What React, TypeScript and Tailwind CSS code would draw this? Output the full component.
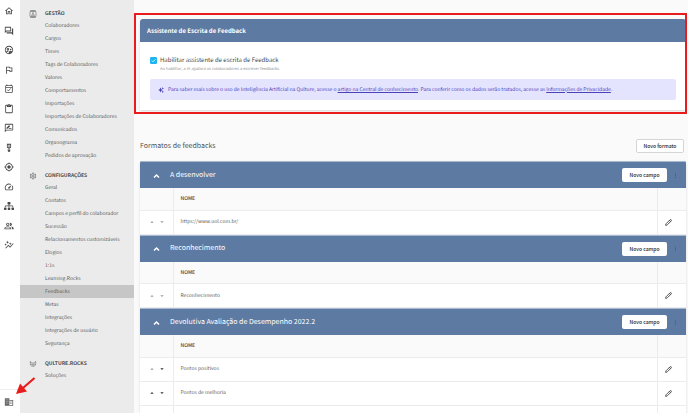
import { useState } from 'react'
import { Pencil } from 'lucide-react'
import type { IconType } from 'react-icons'
import { FaSitemap } from 'react-icons/fa'
import {
  MdArrowDropDown,
  MdArrowDropUp,
  MdAutoGraph,
  MdContentPaste,
  MdMoreVert,
  MdMyLocation,
  MdOutlineContacts,
  MdOutlineEventAvailable,
  MdOutlineFlag,
  MdOutlineForum,
  MdOutlineHome,
  MdOutlineMilitaryTech,
  MdOutlinePeopleAlt,
  MdOutlineRateReview,
  MdOutlineSettings,
  MdOutlineSupervisedUserCircle,
  MdSpeed,
} from 'react-icons/md'

const railItems: { label: string; icon: IconType }[] = [
  { label: 'Início', icon: MdOutlineHome },
  { label: 'Feedbacks', icon: MdOutlineForum },
  { label: 'Equipe', icon: MdOutlineSupervisedUserCircle },
  { label: 'Metas', icon: MdOutlineFlag },
  { label: 'Reuniões', icon: MdOutlineEventAvailable },
  { label: 'Pesquisas', icon: MdContentPaste },
  { label: 'Avaliações', icon: MdOutlineRateReview },
  { label: 'Reconhecimentos', icon: MdOutlineMilitaryTech },
  { label: 'Objetivos', icon: MdMyLocation },
  { label: 'Desempenho', icon: MdSpeed },
  { label: 'Organograma', icon: FaSitemap },
  { label: 'Pessoas', icon: MdOutlinePeopleAlt },
  { label: 'Análises', icon: MdAutoGraph },
]

function QultureIcon({ className }: { className?: string }) {
  return (
    <svg className={className} viewBox="0 0 24 24" fill="none" stroke="currentColor" strokeWidth={2}>
      <path d="M4 4v8c0 4 3 7 8 7s8-3 8-7V4l-4 5H8L4 4z" />
      <path d="M5 13h14M12 13v5" />
    </svg>
  )
}

function BuildingIcon({ className }: { className?: string }) {
  return (
    <svg className={className} viewBox="0 0 24 24" fill="currentColor">
      <path d="M2 3h11v18H2z" />
      <path d="M13 7h9v14h-9v-2h7V9h-7z" />
      <path d="M15 11h3v2h-3zM15 15h3v2h-3z" />
      <path d="M4 7h7M4 11h7M4 15h7" stroke="#fff" strokeWidth={0.8} />
    </svg>
  )
}

const menu = [
  {
    title: 'GESTÃO',
    icon: MdOutlineContacts,
    items: [
      'Colaboradores',
      'Cargos',
      'Times',
      'Tags de Colaboradores',
      'Valores',
      'Comportamentos',
      'Importações',
      'Importações de Colaboradores',
      'Comunicados',
      'Organograma',
      'Pedidos de aprovação',
    ],
  },
  {
    title: 'CONFIGURAÇÕES',
    icon: MdOutlineSettings,
    items: [
      'Geral',
      'Contatos',
      'Campos e perfil do colaborador',
      'Sucessão',
      'Relacionamentos customizáveis',
      'Elogios',
      '1:1s',
      'Learning.Rocks',
      'Feedbacks',
      'Metas',
      'Integrações',
      'Integrações de usuário',
      'Segurança',
    ],
  },
  { title: 'QULTURE.ROCKS', icon: QultureIcon, items: ['Soluções'] },
]

interface Field {
  name: string
  canMoveUp?: boolean
  canMoveDown?: boolean
}

const formats: { title: string; fields: Field[] }[] = [
  { title: 'A desenvolver', fields: [{ name: 'https://www.uol.com.br/' }] },
  { title: 'Reconhecimento', fields: [{ name: 'Reconhecimento' }] },
  {
    title: 'Devolutiva Avaliação de Desempenho 2022.2',
    fields: [
      { name: 'Pontos positivos', canMoveDown: true },
      { name: 'Pontos de melhoria', canMoveUp: true, canMoveDown: true },
      { name: '', canMoveUp: true },
    ],
  },
]

function Rail() {
  return (
    <nav className="flex w-5 shrink-0 flex-col bg-white text-[#4a4a4a]">
      <div className="flex h-[250px] flex-col items-center justify-between pt-[6px]">
        {railItems.map(({ label, icon: Icon }) => (
          <a key={label} href="#" aria-label={label} className="pr-[2px]">
            <Icon className="size-[10px]" />
          </a>
        ))}
      </div>
      <a
        href="#"
        aria-label="Administração"
        className="mt-auto flex h-6 items-center justify-center border-t border-[#eee] pr-[2px] text-[#666]"
      >
        <BuildingIcon className="size-[10px]" />
      </a>
    </nav>
  )
}

function Sidebar() {
  return (
    <aside className="flex w-[114px] shrink-0 flex-col gap-[6px] bg-[#ebebeb] pt-[6px] text-[5px] leading-[13px] text-[#5c5c5c]">
      {menu.map(({ title, icon: Icon, items }) => (
        <section key={title}>
          <h2 className="flex items-center pt-[2px] leading-[11px] font-bold text-[#4a4a4a]">
            <span className="flex w-[25px] justify-center text-[#777]">
              <Icon className="size-2" />
            </span>
            {title}
          </h2>
          <ul>
            {items.map((item) => (
              <li key={item}>
                <a
                  href="#"
                  className={`block pl-[25px] whitespace-nowrap ${item === 'Feedbacks' ? 'bg-[#c6c6c6]' : ''}`}
                >
                  {item}
                </a>
              </li>
            ))}
          </ul>
        </section>
      ))}
    </aside>
  )
}

function AssistantCard() {
  const [enabled, setEnabled] = useState(true)

  return (
    <section className="overflow-hidden rounded-t-[3px] bg-white shadow-sm">
      <h2 className="bg-[#5d7aa2] px-[7px] text-[6px] leading-[23px] font-bold text-white">
        Assistente de Escrita de Feedback
      </h2>
      <div className="px-[10px] pt-3 pb-[10px]">
        <div className="flex items-center gap-[3px]">
          <span className="grid size-[7px] shrink-0">
            <input
              id="assistant"
              type="checkbox"
              checked={enabled}
              onChange={(e) => setEnabled(e.target.checked)}
              className="col-start-1 row-start-1 size-[7px] appearance-none rounded-[1px] border border-[#1cb5f2] checked:bg-[#1cb5f2]"
            />
            {enabled && (
              <svg
                className="pointer-events-none col-start-1 row-start-1 size-[7px] text-white"
                viewBox="0 0 14 14"
                fill="none"
                stroke="currentColor"
                strokeWidth={1.5}
              >
                <path d="M3.5 7.2 6 9.7l4.7-5" />
              </svg>
            )}
          </span>
          <label htmlFor="assistant" className="text-[6px] leading-[12px] text-[#444]">
            Habilitar assistente de escrita de Feedback
          </label>
        </div>
        <p className="pl-[10px] font-['Open_Sans',sans-serif] text-[4px] leading-[7px] text-[#8a8a8a]">
          Ao habilitar, a IA ajudará os colaboradores a escrever feedbacks.
        </p>
        <div className="mt-[6px] flex h-[21px] items-center gap-1 rounded-[2px] bg-[#e5e4ff] px-2 text-[5px] text-[#4a42b8]">
          {/* Sparkle */}
          <svg className="size-[6px] shrink-0" viewBox="0 0 24 24" fill="currentColor">
            <path d="M10 2l3 7 6 3-6 3-3 7-3-7-6-3 6-3z" />
            <path d="M19 0l1.500 3.500L24 5l-3.500 1.500L19 10l-1.500-3.500L14 5l3.500-1.500zM19 14l1.500 3.500L24 19l-3.500 1.500L19 24l-1.500-3.500L14 19l3.500-1.500z" />
          </svg>
          <p className="whitespace-nowrap">
            Para saber mais sobre o uso de Inteligência Artificial na Qulture, acesse o{' '}
            <a href="#" className="underline">
              artigo na Central de conhecimento
            </a>
            . Para conferir como os dados serão tratados, acesse as{' '}
            <a href="#" className="underline">
              Informações de Privacidade
            </a>
            .
          </p>
        </div>
      </div>
    </section>
  )
}

function FormatTable({ title, fields }: { title: string; fields: Field[] }) {
  const [open, setOpen] = useState(true)

  return (
    <section>
      <header className="flex h-[27px] items-center border-t border-[#a9bad0] bg-[#5d7aa2] pr-[7px] text-white">
        <button
          aria-label={open ? 'Recolher' : 'Expandir'}
          onClick={() => setOpen(!open)}
          className="flex w-[30px] justify-center pl-[2px]"
        >
          <svg className="size-[7px]" viewBox="0 0 14 14" fill="none" stroke="currentColor" strokeWidth={3}>
            <path d="M2 11l5-5 5 5" />
          </svg>
        </button>
        <h3 className="text-[7px]">{title}</h3>
        <button className="mr-[5px] ml-auto h-[14px] w-[45px] rounded-[2px] bg-white text-[5px] font-medium text-[#222]">
          Novo campo
        </button>
        <button aria-label="Mais opções" className="text-[#3f5b85]">
          <MdMoreVert className="size-[7px]" />
        </button>
      </header>
      {open && (
        <table className="w-full table-fixed bg-white text-left text-[5px] text-[#616161]">
          <thead className="bg-[#fafafa]">
            <tr className="h-[22px] border-b border-[#ececec]">
              <td className="w-[33px] border-r border-[#ececec]" />
              <th className="px-[7px] font-medium text-[#444]">NOME</th>
              <td className="w-[29px] border-l border-[#ececec]" />
            </tr>
          </thead>
          <tbody>
            {fields.map((field, i) => (
              <tr key={i} className="h-6 border-b border-[#ececec]">
                <td className="border-r border-[#ececec]">
                  <div className="flex justify-center gap-[2px] pl-[2px]">
                    <button
                      aria-label="Mover para cima"
                      disabled={!field.canMoveUp}
                      className="text-[#333] disabled:text-[#999]"
                    >
                      <MdArrowDropUp className="size-2" />
                    </button>
                    <button
                      aria-label="Mover para baixo"
                      disabled={!field.canMoveDown}
                      className="text-[#333] disabled:text-[#999]"
                    >
                      <MdArrowDropDown className="size-2" />
                    </button>
                  </div>
                </td>
                <td className="px-[7px]">{field.name}</td>
                <td className="border-l border-[#ececec]">
                  <button aria-label="Editar" className="flex w-full justify-center pr-[6px] text-[#444]">
                    <Pencil className="size-[7px]" strokeWidth={3} />
                  </button>
                </td>
              </tr>
            ))}
          </tbody>
        </table>
      )}
    </section>
  )
}

export default function App() {
  return (
    <div className="relative flex h-screen overflow-hidden bg-[#fafafa] font-['Noto_Sans_CJK_SC',sans-serif] [text-rendering:geometricPrecision]">
      <Rail />
      <Sidebar />
      <main className="min-w-0 flex-1 overflow-hidden pr-[2px] pl-[6px]">
        <div className="relative pt-[19px]">
          <AssistantCard />
          {/* Highlight around the assistant card */}
          <div className="pointer-events-none absolute top-[13px] -right-px -bottom-1 -left-[6px] border-2 border-[#e81c1c]" />
        </div>
        <div className="mt-[29px] mb-[8px] flex items-center justify-between pr-[2px]">
          <h1 className="text-[7px] text-[#555]">Formatos de feedbacks</h1>
          <button className="h-[14px] w-[48px] rounded-[2px] border border-[#d5d5d5] bg-white text-[5px] font-medium text-[#222]">
            Novo formato
          </button>
        </div>
        <div className="overflow-hidden rounded-t-[2px] shadow-sm">
          {formats.map((format) => (
            <FormatTable key={format.title} {...format} />
          ))}
        </div>
      </main>
      {/* Arrow pointing at the administration link */}
      <svg className="pointer-events-none absolute bottom-[18px] left-4 h-[18px] w-5 text-[#e81c1c]" viewBox="0 0 20 18">
        <path d="M18.500 1L7 11" stroke="currentColor" strokeWidth={2.2} />
        <path d="M0 17l4-10.500 7 8z" fill="currentColor" />
      </svg>
    </div>
  )
}
